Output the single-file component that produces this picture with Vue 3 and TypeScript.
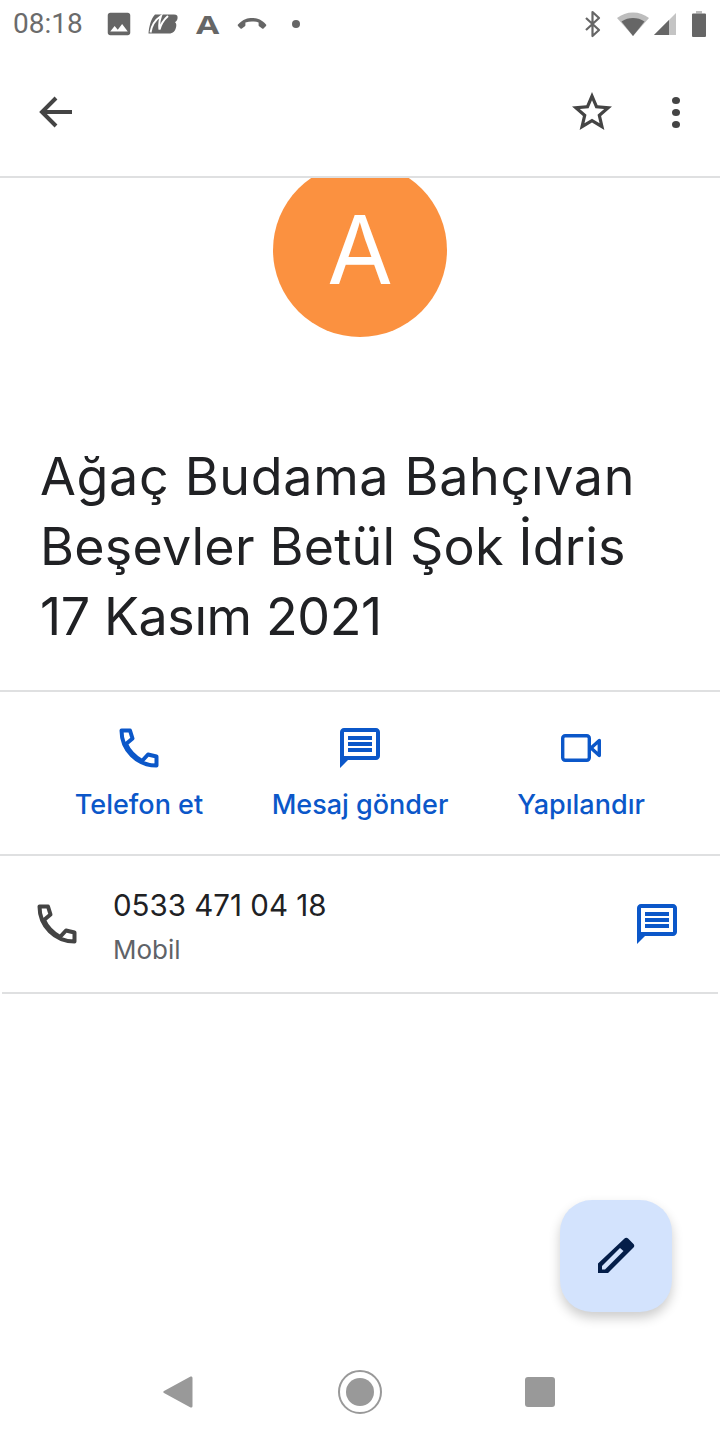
<script setup lang="ts">
const titleLines: string[] = ['Ağaç Budama Bahçıvan', 'Beşevler Betül Şok İdris', '17 Kasım 2021']
const callPath = 'M2.500 2.500H11L13.500 10.500L7 16C10 23 15.500 28.500 23 33L29 26.500L37.500 28.500V37.500C18 37.500 2.500 22 2.500 2.500Z'
const messagePath =
  'M20 2H4c-1.100 0-2 .9-2 2v18l4-4h14c1.100 0 2-.9 2-2V4c0-1.100-.9-2-2-2zm0 14H4V4h16v12zM6 12h12v2H6zm0-3h12v2H6zm0-3h12v2H6z'
</script>

<template>
  <div class="screen">
    <div class="status">
      <div class="status-left">
        <span class="time">08:18</span>
        <svg class="s-icon pic" viewBox="0 0 24 24"><path d="M21 19V5c0-1.100-.9-2-2-2H5c-1.100 0-2 .9-2 2v14c0 1.100.9 2 2 2h14c1.100 0 2-.9 2-2zM8.500 13.500l2.500 3 3.500-4.500 4.500 6H5l3.500-4.500z" /></svg>
        <svg class="s-logo" viewBox="0 0 30 20"><path d="M7 .5h19c3 0 4 1.500 3.500 4-.3 1.800-1.200 3-2.500 3.800 1.200 1 1.600 2.300 1.200 4.200C27.500 17 25 19.500 21 19.500H.5C1 13 3 4.500 7 .5z" /><path d="M2.500 18.500C3.500 12 7 6 13 2c-1.500 4-2.300 8-1.500 13.500C13 10 16 5.500 20 2" fill="none" stroke="#fff" stroke-width="2" /></svg>
        <span class="s-a">A</span>
        <svg class="s-end" viewBox="0 0 30 14"><path d="M1 7.500C6 2 11 1 15 1s9 1 14 6.500c.4.500.4 1 0 1.400l-2.500 2.600c-.5.400-1 .4-1.400 0l-3-2.200c-.4-.3-.5-.7-.5-1.100V5.400C19.500 4.800 17 4.500 15 4.500s-4.500.3-6.600.900v2.800c0 .4-.1.8-.5 1.100l-3 2.200c-.4.4-.9.4-1.400 0L1 8.900c-.4-.4-.4-.9 0-1.400z" /></svg>
        <span class="s-dot"></span>
      </div>
      <div class="status-right">
        <svg class="s-bt" viewBox="0 0 18 28"><path d="M2 8l13 12-6.500 6V2L15 8 2 20" fill="none" stroke="#666" stroke-width="2.200" stroke-linejoin="round" /></svg>
        <svg class="s-wifi" viewBox="0 0 32 24"><path d="M16 24L0 6C4.500 2.500 10 .5 16 .5S27.500 2.500 32 6z" fill="#bdbdbd" /><path d="M16 24L4.500 9.500C8 7 12 6 16 6s8 1 11.500 3.500z" fill="#666" /></svg>
        <svg class="s-signal" viewBox="0 0 22 22"><path d="M22 0v22H0z" fill="#c4c4c4" /><path d="M15 7v15H0z" fill="#666" /></svg>
        <svg class="s-batt" viewBox="0 0 14 26"><path d="M4 0h6v2.500H4z" fill="#bdbdbd" /><path d="M1 2.500h12a1 1 0 0 1 1 1V25a1 1 0 0 1-1 1H1a1 1 0 0 1-1-1V3.500a1 1 0 0 1 1-1z" fill="#666" /></svg>
      </div>
    </div>

    <header class="toolbar">
      <svg class="tb-back" viewBox="0 0 34 32"><path d="M33 16H3M17 2L3 16l14 14" fill="none" stroke="#444" stroke-width="4" /></svg>
      <div class="tb-right">
        <svg class="tb-star" viewBox="0 0 24 24"><path d="M22 9.240l-7.190-.62L12 2 9.190 8.630 2 9.240l5.460 4.730L5.820 21 12 17.270 18.180 21l-1.630-7.030L22 9.240zM12 15.400l-3.760 2.270 1-4.280-3.320-2.880 4.380-.38L12 6.100l1.710 4.040 4.380.38-3.320 2.880 1 4.280L12 15.400z" fill="#444" /></svg>
        <div class="tb-more"><i></i><i></i><i></i></div>
      </div>
    </header>

    <section class="hero">
      <div class="avatar">A</div>
      <h1 class="title"><span v-for="line in titleLines" :key="line">{{ line }}</span></h1>
    </section>

    <nav class="actions">
      <div class="action">
        <svg class="a-call" viewBox="0 0 40 40"><path :d="callPath" /></svg>
        <span>Telefon et</span>
      </div>
      <div class="action">
        <svg class="a-msg" viewBox="2 2 20 20"><path :d="messagePath" /></svg>
        <span>Mesaj gönder</span>
      </div>
      <div class="action">
        <svg class="a-video" viewBox="0 0 40 28"><rect x="1.700" y="1.700" width="26.600" height="24.600" rx="2.500" /><path d="M30 14l8.300-7.500v15z" stroke-linejoin="round" /></svg>
        <span>Yapılandır</span>
      </div>
    </nav>

    <div class="contact">
      <svg class="c-call" viewBox="0 0 40 40"><path :d="callPath" /></svg>
      <div class="c-text">
        <div class="c-num">0533 471 04 18</div>
        <div class="c-type">Mobil</div>
      </div>
      <svg class="c-msg" viewBox="2 2 20 20"><path :d="messagePath" /></svg>
    </div>

    <button class="fab" type="button" aria-label="Düzenle">
      <svg viewBox="0 0 38 38"><path d="M27.500 1.500c1-1 2.600-1 3.600 0l5.400 5.400c1 1 1 2.600 0 3.600L11 36H1v-9.500z" fill="#041e49" /><path d="M23 11l3.500 3L8 32.500H5V29z" fill="#d3e3fd" /></svg>
    </button>

    <footer class="navbar">
      <svg class="n-back" viewBox="0 0 30 32"><path d="M28 .5c1 0 1.500.6 1.500 1.500v28c0 1-.6 1.500-1.500 1.500-.3 0-.6 0-.9-.2L1 17c-1-.6-1-1.500 0-2L27.100.7c.3-.2.600-.2.900-.2z" /></svg>
      <div class="n-home"><span></span></div>
      <div class="n-recent"></div>
    </footer>
  </div>
</template>

<style scoped>
.screen {
  position: relative;
  width: 720px;
  height: 1440px;
  overflow: hidden;
  background: #fff;
  display: flex;
  flex-direction: column;
  font-family: Inter, "Noto Sans", sans-serif;
}
.status {
  height: 48px;
  box-sizing: border-box;
  padding: 0 14px 0 13px;
  display: flex;
  justify-content: space-between;
  align-items: center;
}
.status-left,
.status-right {
  display: flex;
  align-items: center;
}
.time {
  font: 400 28px/1 Roboto, sans-serif;
  color: #6b6b6b;
  width: 69px;
  white-space: nowrap;
}
.s-icon {
  width: 30px;
  height: 30px;
  margin-left: 22px;
  fill: #666;
}
.s-logo {
  width: 30px;
  height: 20px;
  margin-left: 14px;
  fill: #666;
}
.s-a {
  font: 700 25px/1 "Open Sans", sans-serif;
  color: #666;
  margin-left: 21px;
  transform: scaleX(1.35);
}
.s-end {
  width: 30px;
  height: 14px;
  margin-left: 21px;
  fill: #666;
}
.s-dot {
  width: 8px;
  height: 8px;
  border-radius: 50%;
  background: #666;
  margin-left: 25px;
}
.s-bt {
  width: 18px;
  height: 28px;
  margin-right: 15px;
}
.s-wifi {
  width: 32px;
  height: 24px;
  margin-right: 5px;
}
.s-signal {
  width: 22px;
  height: 22px;
  margin-right: 16px;
}
.s-batt {
  width: 14px;
  height: 26px;
}
.toolbar {
  height: 130px;
  box-sizing: border-box;
  border-bottom: 2px solid #dfe0e1;
  padding: 0 40px 0 39px;
  display: flex;
  justify-content: space-between;
  align-items: center;
}
.tb-back {
  width: 34px;
  height: 32px;
}
.tb-right {
  display: flex;
  align-items: center;
  gap: 56px;
}
.tb-star {
  width: 48px;
  height: 48px;
}
.tb-more {
  display: flex;
  flex-direction: column;
  gap: 5px;
}
.tb-more i {
  display: block;
  width: 8px;
  height: 7px;
  border-radius: 50%;
  background: #444;
}
.hero {
  height: 514px;
  box-sizing: border-box;
  overflow: hidden;
  border-bottom: 2px solid #dfe0e1;
  display: flex;
  flex-direction: column;
}
.avatar {
  flex: none;
  width: 174px;
  height: 174px;
  margin: -15px auto 0;
  border-radius: 50%;
  background: #fb9140;
  color: #fff;
  font: 400 95px/174px Inter, sans-serif;
  text-align: center;
}
.title {
  margin: 105px 0 0;
  padding-left: 40px;
  font: 400 52px/70px Inter, sans-serif;
  letter-spacing: 0.2px;
  color: #202124;
  display: flex;
  flex-direction: column;
  white-space: nowrap;
}
.title span:nth-child(1) {
  letter-spacing: 0.67px;
}
.title span:nth-child(3) {
  letter-spacing: -0.4px;
}
.actions {
  height: 164px;
  box-sizing: border-box;
  padding: 0 28.5px;
  border-bottom: 2px solid #dfe0e1;
  display: grid;
  grid-template-columns: repeat(3, 1fr);
}
.action {
  display: flex;
  flex-direction: column;
  align-items: center;
  font: 500 27px/32px Inter, sans-serif;
  color: #0b57c9;
  white-space: nowrap;
}
.action svg {
  flex: none;
}
.a-call {
  width: 40px;
  height: 40px;
  margin: 36px 0 21px;
  fill: none;
  stroke: #0b57c9;
  stroke-width: 4;
  stroke-linejoin: round;
}
.a-msg {
  width: 40px;
  height: 40px;
  margin: 36px 0 21px;
  fill: #0b57c9;
}
.a-video {
  width: 40px;
  height: 28px;
  margin: 42px 0 27px;
  fill: none;
  stroke: #0b57c9;
  stroke-width: 3.400;
}
.contact {
  height: 138px;
  box-sizing: border-box;
  margin: 0 2px;
  padding: 0 41px 0 35px;
  border-bottom: 2px solid #dfe0e1;
  display: flex;
  align-items: center;
}
.c-call {
  width: 40px;
  height: 40px;
  fill: none;
  stroke: #444;
  stroke-width: 4;
  stroke-linejoin: round;
}
.c-text {
  flex: 1;
  margin-left: 36px;
  padding-top: 4px;
}
.c-num {
  font: 400 29.500px/38px Inter, sans-serif;
  color: #202124;
}
.c-type {
  margin-top: 10px;
  font: 400 26px/32px Inter, sans-serif;
  color: #5f6368;
}
.c-msg {
  width: 40px;
  height: 40px;
  fill: #0b57c9;
}
.fab {
  position: absolute;
  left: 560px;
  top: 1200px;
  width: 112px;
  height: 112px;
  padding: 0;
  border: 0;
  border-radius: 32px;
  background: #d3e3fd;
  box-shadow: 0 6px 12px rgba(0, 0, 0, 0.2);
  display: flex;
  align-items: center;
  justify-content: center;
}
.fab svg {
  width: 38px;
  height: 38px;
}
.navbar {
  margin-top: auto;
  margin-bottom: 26px;
  height: 44px;
  display: flex;
  align-items: center;
}
.n-back {
  width: 30px;
  height: 32px;
  margin-left: 163px;
  fill: #999;
}
.n-home {
  width: 44px;
  height: 44px;
  box-sizing: border-box;
  margin-left: 145px;
  border: 2px solid #999;
  border-radius: 50%;
  display: flex;
  align-items: center;
  justify-content: center;
}
.n-home span {
  width: 28px;
  height: 28px;
  border-radius: 50%;
  background: #999;
}
.n-recent {
  width: 30px;
  height: 30px;
  margin-left: 143px;
  border-radius: 3px;
  background: #999;
}
</style>
